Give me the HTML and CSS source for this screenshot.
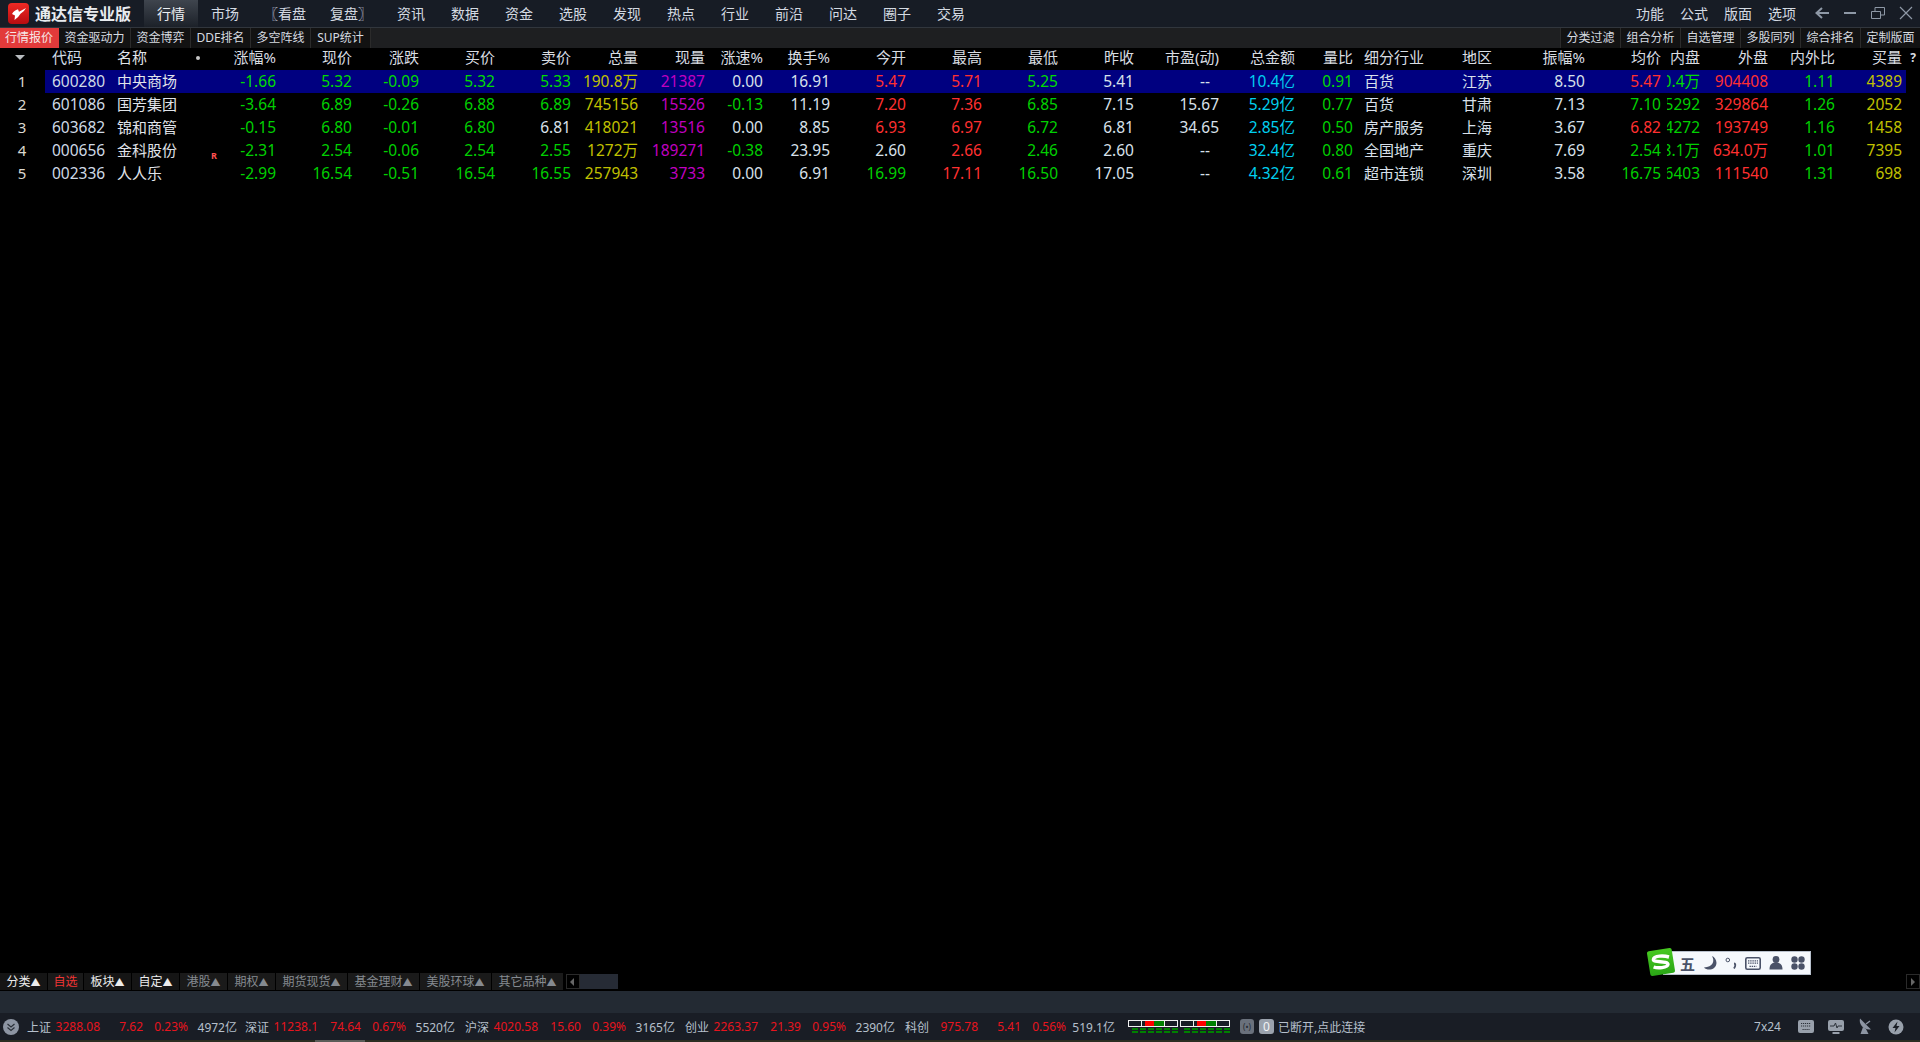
FILE: index.html

```html
<!DOCTYPE html>
<html lang="zh-CN">
<head>
  <meta charset="UTF-8">
  <title>通达信专业版</title>
  <link rel="stylesheet" href="styles.css">
</head>
<body>

  <div class="topbar">
    <div class="logo">
      <svg width="21" height="21" viewBox="0 0 21 21">
        <defs>
          <linearGradient id="logoRed" x1="0" y1="0" x2="0" y2="1">
            <stop offset="0" stop-color="#f02a24"/>
            <stop offset="1" stop-color="#b80c10"/>
          </linearGradient>
        </defs>
        <rect width="21" height="21" rx="4" fill="url(#logoRed)"/>
        <path d="M18 5L11 8.8L10 6.2Q6 7.2 4 11L7 12.5L6.5 17Q10.5 14.5 12.5 10.8Q16 9 18 5Z" fill="#fff"/>
      </svg>
    </div>
    <div class="apptitle">通达信专业版</div>
    <div class="menu">
      <a class="on">行情</a>
      <a>市场</a>
      <a class="wide">〖看盘</a>
      <a class="wide">复盘〗</a>
      <a>资讯</a>
      <a>数据</a>
      <a>资金</a>
      <a>选股</a>
      <a>发现</a>
      <a>热点</a>
      <a>行业</a>
      <a>前沿</a>
      <a>问达</a>
      <a>圈子</a>
      <a>交易</a>
    </div>
    <div class="topright">
      <a>功能</a>
      <a>公式</a>
      <a>版面</a>
      <a>选项</a>
      <svg class="winbtn" width="16" height="14" viewBox="0 0 16 14"><path d="M15 7H3M8 2L2.5 7L8 12" fill="none" stroke="#8e98a6" stroke-width="2"/></svg>
      <svg class="winbtn" width="14" height="14" viewBox="0 0 14 14"><path d="M1 7H13" stroke="#8e98a6" stroke-width="2"/></svg>
      <svg class="winbtn" width="16" height="14" viewBox="0 0 16 14"><path d="M1.5 5.5H10.5V12.5H1.5ZM5 5.5V1.5H14.5V9H10.5" fill="none" stroke="#8e98a6"/></svg>
      <svg class="winbtn" width="14" height="14" viewBox="0 0 14 14"><path d="M1 1L13 13M13 1L1 13" stroke="#8e98a6" stroke-width="1.2"/></svg>
    </div>
  </div>

  <div class="subbar">
    <div class="subtabs">
      <a class="red w58">行情报价</a>
      <a class="w71">资金驱动力</a>
      <a class="w59">资金博弈</a>
      <a class="w60">DDE排名</a>
      <a class="w59">多空阵线</a>
      <a class="w59">SUP统计</a>
    </div>
    <div class="subtabs">
      <a class="w60">分类过滤</a>
      <a class="w60">组合分析</a>
      <a class="w60">自选管理</a>
      <a class="w60">多股同列</a>
      <a class="w60">综合排名</a>
      <a class="w59">定制版面</a>
    </div>
  </div>

  <div class="quotes">
    <div class="row head">
      <div class="c-num"><span class="sortmark"></span></div>
      <div class="c-code">代码</div>
      <div class="c-name">名称</div>
      <div class="c-flag"><span class="dot"></span></div>
      <div>涨幅%</div><div>现价</div><div>涨跌</div><div>买价</div><div>卖价</div><div>总量</div><div>现量</div>
      <div>涨速%</div><div>换手%</div><div>今开</div><div>最高</div><div>最低</div><div>昨收</div><div>市盈(动)</div>
      <div>总金额</div><div>量比</div>
      <div class="c-ind">细分行业</div>
      <div class="c-area">地区</div>
      <div>振幅%</div><div>均价</div>
      <div class="c-clip"><span>内盘</span></div>
      <div>外盘</div><div>内外比</div>
      <div class="c-buy">买量</div>
      <div class="c-end">?</div>
    </div>

    <div class="row sel">
      <div class="c-num">1</div>
      <div class="c-code">600280</div>
      <div class="c-name">中央商场</div>
      <div class="c-flag"></div>
      <div class="g">-1.66</div><div class="g">5.32</div><div class="g">-0.09</div><div class="g">5.32</div><div class="g">5.33</div>
      <div class="y">190.8万</div><div class="m">21387</div><div>0.00</div><div>16.91</div>
      <div class="r">5.47</div><div class="r">5.71</div><div class="g">5.25</div><div>5.41</div><div class="dash">--</div>
      <div class="b">10.4亿</div><div class="g">0.91</div>
      <div class="c-ind">百货</div><div class="c-area">江苏</div>
      <div>8.50</div><div class="r">5.47</div>
      <div class="c-clip g"><span>100.4万</span></div>
      <div class="r">904408</div><div class="g">1.11</div>
      <div class="c-buy y">4389</div><div class="c-end"></div>
    </div>

    <div class="row">
      <div class="c-num">2</div>
      <div class="c-code">601086</div>
      <div class="c-name">国芳集团</div>
      <div class="c-flag"></div>
      <div class="g">-3.64</div><div class="g">6.89</div><div class="g">-0.26</div><div class="g">6.88</div><div class="g">6.89</div>
      <div class="y">745156</div><div class="m">15526</div><div class="g">-0.13</div><div>11.19</div>
      <div class="r">7.20</div><div class="r">7.36</div><div class="g">6.85</div><div>7.15</div><div>15.67</div>
      <div class="b">5.29亿</div><div class="g">0.77</div>
      <div class="c-ind">百货</div><div class="c-area">甘肃</div>
      <div>7.13</div><div class="g">7.10</div>
      <div class="c-clip g"><span>415292</span></div>
      <div class="r">329864</div><div class="g">1.26</div>
      <div class="c-buy y">2052</div><div class="c-end"></div>
    </div>

    <div class="row">
      <div class="c-num">3</div>
      <div class="c-code">603682</div>
      <div class="c-name">锦和商管</div>
      <div class="c-flag"></div>
      <div class="g">-0.15</div><div class="g">6.80</div><div class="g">-0.01</div><div class="g">6.80</div><div>6.81</div>
      <div class="y">418021</div><div class="m">13516</div><div>0.00</div><div>8.85</div>
      <div class="r">6.93</div><div class="r">6.97</div><div class="g">6.72</div><div>6.81</div><div>34.65</div>
      <div class="b">2.85亿</div><div class="g">0.50</div>
      <div class="c-ind">房产服务</div><div class="c-area">上海</div>
      <div>3.67</div><div class="r">6.82</div>
      <div class="c-clip g"><span>224272</span></div>
      <div class="r">193749</div><div class="g">1.16</div>
      <div class="c-buy y">1458</div><div class="c-end"></div>
    </div>

    <div class="row">
      <div class="c-num">4</div>
      <div class="c-code">000656</div>
      <div class="c-name">金科股份</div>
      <div class="c-flag"><span class="rmark">R</span></div>
      <div class="g">-2.31</div><div class="g">2.54</div><div class="g">-0.06</div><div class="g">2.54</div><div class="g">2.55</div>
      <div class="y">1272万</div><div class="m">189271</div><div class="g">-0.38</div><div>23.95</div>
      <div>2.60</div><div class="r">2.66</div><div class="g">2.46</div><div>2.60</div><div class="dash">--</div>
      <div class="b">32.4亿</div><div class="g">0.80</div>
      <div class="c-ind">全国地产</div><div class="c-area">重庆</div>
      <div>7.69</div><div class="g">2.54</div>
      <div class="c-clip g"><span>638.1万</span></div>
      <div class="r">634.0万</div><div class="g">1.01</div>
      <div class="c-buy y">7395</div><div class="c-end"></div>
    </div>

    <div class="row">
      <div class="c-num">5</div>
      <div class="c-code">002336</div>
      <div class="c-name">人人乐</div>
      <div class="c-flag"></div>
      <div class="g">-2.99</div><div class="g">16.54</div><div class="g">-0.51</div><div class="g">16.54</div><div class="g">16.55</div>
      <div class="y">257943</div><div class="m">3733</div><div>0.00</div><div>6.91</div>
      <div class="g">16.99</div><div class="r">17.11</div><div class="g">16.50</div><div>17.05</div><div class="dash">--</div>
      <div class="b">4.32亿</div><div class="g">0.61</div>
      <div class="c-ind">超市连锁</div><div class="c-area">深圳</div>
      <div>3.58</div><div class="g">16.75</div>
      <div class="c-clip g"><span>146403</span></div>
      <div class="r">111540</div><div class="g">1.31</div>
      <div class="c-buy y">698</div><div class="c-end"></div>
    </div>

    <div class="ime">
      <svg class="ime-logo" width="30" height="30" viewBox="0 0 30 30">
        <defs>
          <linearGradient id="imeGreen" x1="0" y1="0" x2="0" y2="1">
            <stop offset="0" stop-color="#46c820"/>
            <stop offset="1" stop-color="#2aa616"/>
          </linearGradient>
        </defs>
        <rect x="2.5" y="2.5" width="25" height="25" rx="2" fill="url(#imeGreen)" transform="rotate(-9 15 15)"/>
        <path d="M23 10C18 8.6 8 8.4 7.4 12.4C7 15.8 22 13.6 22 17.4C21.6 21 11.5 21.4 7.6 20" fill="none" stroke="#fff" stroke-width="3.4"/>
      </svg>
      <span class="ime-wu">五</span>
      <svg width="14" height="16" viewBox="0 0 14 16"><path d="M9 1C12 6 10 12 1 12.5C4 16 13 15.5 13.5 8C13.5 5 11.5 2 9 1Z" fill="#4a5268"/></svg>
      <svg width="12" height="14" viewBox="0 0 12 14"><circle cx="2.8" cy="4" r="1.8" fill="none" stroke="#4a5268"/><path d="M9 7.5C10.5 7.5 11 9.5 9 12.5" stroke="#4a5268" stroke-width="1.8" fill="none"/></svg>
      <svg width="16" height="13" viewBox="0 0 16 13"><rect x="0.8" y="0.8" width="14.4" height="11.4" rx="1.5" fill="none" stroke="#4a5268" stroke-width="1.6"/><path d="M3 3.8H13M3 6.2H13M4.5 9.4H11.5" stroke="#4a5268" stroke-width="1.3" stroke-dasharray="1.4 .8"/></svg>
      <svg width="14" height="14" viewBox="0 0 14 14"><circle cx="7" cy="3.5" r="3.4" fill="#4a5268"/><path d="M0.5 13.5C0.5 8 3.5 6.5 7 6.5C10.5 6.5 13.5 8 13.5 13.5Z" fill="#4a5268"/></svg>
      <svg width="14" height="14" viewBox="0 0 14 14"><circle cx="3.5" cy="3.5" r="3.2" fill="#4a5268"/><circle cx="10.5" cy="3.5" r="3.2" fill="#4a5268"/><circle cx="3.5" cy="10.5" r="3.2" fill="#4a5268"/><circle cx="10.5" cy="10.5" r="3.2" fill="#4a5268"/></svg>
    </div>
  </div>

  <div class="tabbar">
    <a class="t48 act">分类<i>▲</i></a>
    <a class="t36 cur">自选</a>
    <a class="t48 act">板块<i>▲</i></a>
    <a class="t48 act">自定<i>▲</i></a>
    <a class="t48">港股<i>▲</i></a>
    <a class="t48">期权<i>▲</i></a>
    <a class="t72">期货现货<i>▲</i></a>
    <a class="t72">基金理财<i>▲</i></a>
    <a class="t72">美股环球<i>▲</i></a>
    <a class="t72">其它品种<i>▲</i></a>
    <span class="scrollbtn left"></span>
    <span class="thumb"></span>
    <span class="scrollbtn right"></span>
  </div>

  <div class="band"></div>

  <div class="status">
    <svg class="s-toggle" width="16" height="16" viewBox="0 0 16 16"><circle cx="8" cy="8" r="8" fill="#8d95a3"/><path d="M4.5 5L8 8L11.5 5M4.5 8.5L8 11.5L11.5 8.5" fill="none" stroke="#2a3038" stroke-width="1.2"/></svg>
    <div class="idx first"><span class="lbl">上证</span><span class="red">3288.08</span><span class="red">7.62</span><span class="red">0.23%</span><span>4972亿</span></div>
    <div class="idx"><span class="lbl">深证</span><span class="red">11238.1</span><span class="red">74.64</span><span class="red">0.67%</span><span>5520亿</span></div>
    <div class="idx"><span class="lbl">沪深</span><span class="red">4020.58</span><span class="red">15.60</span><span class="red">0.39%</span><span>3165亿</span></div>
    <div class="idx"><span class="lbl">创业</span><span class="red">2263.37</span><span class="red">21.39</span><span class="red">0.95%</span><span>2390亿</span></div>
    <div class="idx"><span class="lbl">科创</span><span class="red">975.78</span><span class="red">5.41</span><span class="red">0.56%</span><span>519.1亿</span></div>

    <div class="meter m1">
      <div class="cells"><b></b><b class="mid"><u class="mr"></u><u class="mg"></u></b><b></b></div>
      <div class="dashes"></div>
    </div>
    <div class="meter">
      <div class="cells"><b></b><b class="mid"><u class="mr"></u><u class="mg"></u></b><b></b></div>
      <div class="dashes"></div>
    </div>

    <span class="chip">(•)</span>
    <span class="chip light">0</span>
    <span class="conn">已断开,点此连接</span>

    <div class="s-right">
      <span class="clock">7x24</span>
      <svg width="16" height="13" viewBox="0 0 16 13"><rect width="16" height="13" rx="2" fill="#98a0ab"/><path d="M3 3.5H13M3 6H13M4.5 9.5H11.5" stroke="#2c323a" stroke-width="1.2" stroke-dasharray="1.2 .8"/></svg>
      <svg width="16" height="14" viewBox="0 0 16 14"><rect width="16" height="11" rx="2" fill="#98a0ab"/><path d="M4.5 13H11.5" stroke="#98a0ab" stroke-width="2"/><path d="M2 6H6L7.5 3L9 8L10 6H14" fill="none" stroke="#2c323a"/></svg>
      <svg width="16" height="17" viewBox="0 0 16 17"><path d="M2 0.5C0.5 6 5.5 12.5 13 11.5Z" fill="#8d95a3"/><path d="M5 9L2.5 16H10.5L8 11Z" fill="#8d95a3"/><path d="M8 6L12 3" stroke="#8d95a3" stroke-width="1.4"/></svg>
      <svg width="16" height="16" viewBox="0 0 16 16"><circle cx="8" cy="8" r="7.5" fill="#98a0ab"/><path d="M9.5 2.5L4.5 9H7.5L6.5 13.5L11.5 7H8.5Z" fill="#1a1e26"/></svg>
    </div>
  </div>

  <div class="edge"><span></span></div>

</body>
</html>
```

FILE: styles.css

```css
* {
  box-sizing: border-box;
}
html, body {
  height: 100%;
}
body {
  margin: 0;
  background: #000;
  color: #dde3ea;
  font-family: "Noto Sans", "Noto Sans CJK SC", sans-serif;
  display: flex;
  flex-direction: column;
  overflow: hidden;
}

/* top menu */
.topbar {
  height: 28px;
  flex: none;
  display: flex;
  align-items: center;
  background: #171c25;
  border-bottom: 1px solid #31363d;
  font-size: 14px;
  color: #d4dae2;
}
.logo {
  width: 29px;
  padding-left: 8px;
  display: flex;
}
.logo svg {
  flex: none;
}
.apptitle {
  width: 115px;
  padding: 0 0 2px 6px;
  font-size: 16px;
  font-weight: bold;
  color: #e8ebef;
  white-space: nowrap;
}
.menu {
  display: flex;
  height: 100%;
}
.menu a {
  width: 54px;
  padding-bottom: 2px;
  display: flex;
  align-items: center;
  justify-content: center;
}
.menu a.wide {
  width: 66px;
}
.menu a.on {
  background: linear-gradient(#3f454e, #1c2129);
  color: #eef1f4;
}
.topright {
  margin-left: auto;
  display: flex;
  align-items: center;
  height: 100%;
  padding: 0 7px 2px 0;
}
.topright a {
  width: 44px;
  text-align: center;
}
.winbtn {
  margin-left: 13px;
}
.topright a + .winbtn {
  margin-left: 10px;
}

/* second row of tabs */
.subbar {
  height: 20px;
  flex: none;
  display: flex;
  justify-content: space-between;
  background: #1e1f21;
  font-size: 12px;
  color: #d6dbe0;
}
.subtabs {
  display: flex;
}
.subtabs a {
  background: #121212;
  border-right: 1px solid #2b2b2b;
  text-align: center;
  line-height: 19px;
  white-space: nowrap;
}
.subtabs a.red {
  background: #e23a3a;
  color: #f6e8e8;
  border-right-color: #e23a3a;
}
.subtabs:last-child a {
  border-right: 0;
  border-left: 1px solid #2b2b2b;
}
.w58 { width: 59px; }
.w59 { width: 60px; }
.w60 { width: 60px; }
.w71 { width: 72px; }

/* quote table */
.quotes {
  flex: 1;
  position: relative;
  overflow: hidden;
}
.row {
  display: grid;
  grid-template-columns: 45px 67px 88px 25px 51px 76px 67px 76px 76px 67px 67px 58px 67px 76px 76px 76px 76px 85px 76px 58px 109px 73px 50px 76px 39px 68px 67px 71px 14px;
  height: 23px;
  line-height: 23px;
  font-size: 15.5px;
  text-align: right;
  white-space: nowrap;
  color: #d8e0ea;
}
.row.head {
  height: 22px;
  line-height: 19px;
  font-size: 15px;
  color: #d9dde2;
}
.row.sel > div {
  background: #000080;
}
.row.sel > .c-num,
.row.sel > .c-end {
  background: #000;
}
.c-num {
  text-align: center;
  padding-right: 1px;
  color: #dcd8d0;
  font-size: 15px;
}
.c-code {
  text-align: left;
  padding-left: 7px;
  color: #cfdae6;
}
.c-name {
  text-align: left;
  padding-left: 5px;
  font-size: 15px;
  color: #e0e4ea;
}
.c-flag {
  text-align: left;
}
.c-ind {
  text-align: left;
  padding-left: 11px;
  font-size: 15px;
}
.c-area {
  text-align: left;
  font-size: 15px;
}
.c-clip {
  display: flex;
  justify-content: flex-end;
  overflow: hidden;
  margin-left: 6px;
}
.row.sel > .c-clip {
  box-shadow: -6px 0 0 #000080;
}
.c-clip span {
  flex: none;
}
.c-buy {
  padding-right: 4px;
}
.c-end {
  font-size: 12px;
  font-weight: bold;
  text-align: center;
}
.dash {
  padding-right: 9px;
}
.sortmark {
  display: inline-block;
  width: 0;
  height: 0;
  margin-right: 4px;
  border-left: 5px solid transparent;
  border-right: 5px solid transparent;
  border-top: 5px solid #b8bcc0;
  vertical-align: 3px;
}
.dot {
  display: inline-block;
  width: 4px;
  height: 4px;
  border-radius: 50%;
  background: #c8c8c8;
  vertical-align: 3px;
  margin-left: -4px;
}
.rmark {
  font-size: 9px;
  font-weight: bold;
  color: #ff5050;
  position: relative;
  top: 3px;
  left: 11px;
}
.g { color: #00d000; }
.sel .g { color: #00dc00; }
.r { color: #ff3030; }
.y { color: #c0c000; }
.m { color: #c000c0; }
.b { color: #00d0f0; }

/* input method bar floating over the table */
.ime {
  position: absolute;
  left: 1663px;
  top: 903px;
  width: 148px;
  height: 24px;
  padding-left: 16px;
  display: flex;
  align-items: center;
  gap: 8px;
  background: #f5f8fc;
  border: 1px solid #b8c0cc;
}
.ime-logo {
  position: absolute;
  left: -18px;
  top: -5px;
}
.ime-wu {
  font-size: 15px;
  font-weight: bold;
  color: #4a5268;
}

/* bottom category tabs */
.tabbar {
  position: absolute;
  left: 0;
  top: 973px;
  width: 100%;
  height: 17px;
  display: flex;
  font-size: 12px;
  color: #858a90;
}
.tabbar a {
  background: #1a1a1a;
  margin-right: 1px;
  line-height: 17px;
  text-align: center;
  white-space: nowrap;
}
.tabbar a.act {
  background: #151515;
  color: #ececec;
}
.tabbar a.cur {
  color: #f03535;
}
.tabbar i {
  font-style: normal;
  font-size: 10px;
}
.t36 { width: 35px; }
.t48 { width: 47px; }
.t72 { width: 71px; }
.scrollbtn {
  width: 14px;
  height: 15px;
  margin: 1px 0 0 2px;
  border: 1px solid #2a2a2a;
  position: relative;
}
.scrollbtn::after {
  content: "";
  position: absolute;
  left: 3px;
  top: 3px;
  border-top: 4px solid transparent;
  border-bottom: 4px solid transparent;
  border-right: 4px solid #666;
}
.scrollbtn.right {
  margin-left: auto;
}
.scrollbtn.right::after {
  left: 4px;
  border-right: 0;
  border-left: 4px solid #666;
}
.thumb {
  width: 38px;
  height: 15px;
  margin-top: 1px;
  background: #262b35;
}

/* status area */
.band {
  height: 22px;
  flex: none;
  background: #232a33;
}
.status {
  height: 27px;
  flex: none;
  display: flex;
  align-items: center;
  background: #191d25;
  font-size: 12px;
  color: #b6c0cc;
  white-space: nowrap;
}
.s-toggle {
  margin: 0 0 0 3px;
  flex: none;
}
.idx {
  width: 220px;
  display: grid;
  grid-template-columns: 28px 45px 43px 45px 49px;
  text-align: right;
  flex: none;
}
.idx.first {
  width: 218px;
  margin-left: 8px;
}
.idx .lbl {
  text-align: left;
}
.idx .red {
  color: #e8141e;
}
.meter {
  width: 50px;
  margin-right: 2px;
  flex: none;
}
.meter.m1 {
  margin-left: 3px;
}
.cells {
  display: flex;
  height: 7px;
  border: 1px solid #f0f0f0;
}
.cells b {
  flex: 1;
  background: #191d25;
}
.cells b.mid {
  flex: none;
  width: 24px;
  display: flex;
  padding-left: 3px;
  border-left: 1px solid #f0f0f0;
  border-right: 1px solid #f0f0f0;
}
.cells u {
  display: block;
}
.cells u.mr {
  width: 9px;
  background: #ff0000;
}
.cells u.mg {
  width: 10px;
  background: #008000;
}
.dashes {
  height: 5px;
  margin: 1px 0 0 4px;
  background:
    repeating-linear-gradient(90deg, #008000 0 6px, transparent 6px 8px) 0 0 / 100% 2px no-repeat,
    repeating-linear-gradient(90deg, #008000 0 6px, transparent 6px 8px) 0 3px / 100% 2px no-repeat;
}
.chip {
  width: 14px;
  height: 15px;
  margin-left: 8px;
  border-radius: 3px;
  background: #6a717c;
  color: #23282f;
  font-size: 8px;
  line-height: 15px;
  text-align: center;
  flex: none;
}
.chip.light {
  width: 15px;
  margin-left: 5px;
  background: #9aa2ad;
  color: #f2f4f6;
  font-size: 12px;
}
.conn {
  margin-left: 4px;
}
.s-right {
  margin-left: auto;
  display: flex;
  align-items: center;
  gap: 14px;
  padding-right: 16px;
}
.s-right .clock {
  margin-right: 3px;
}
.edge {
  height: 2px;
  flex: none;
  background: #2b2d22;
}
.edge span {
  display: block;
  width: 50px;
  height: 2px;
  margin-left: 315px;
  background: #5a5c58;
}
```
